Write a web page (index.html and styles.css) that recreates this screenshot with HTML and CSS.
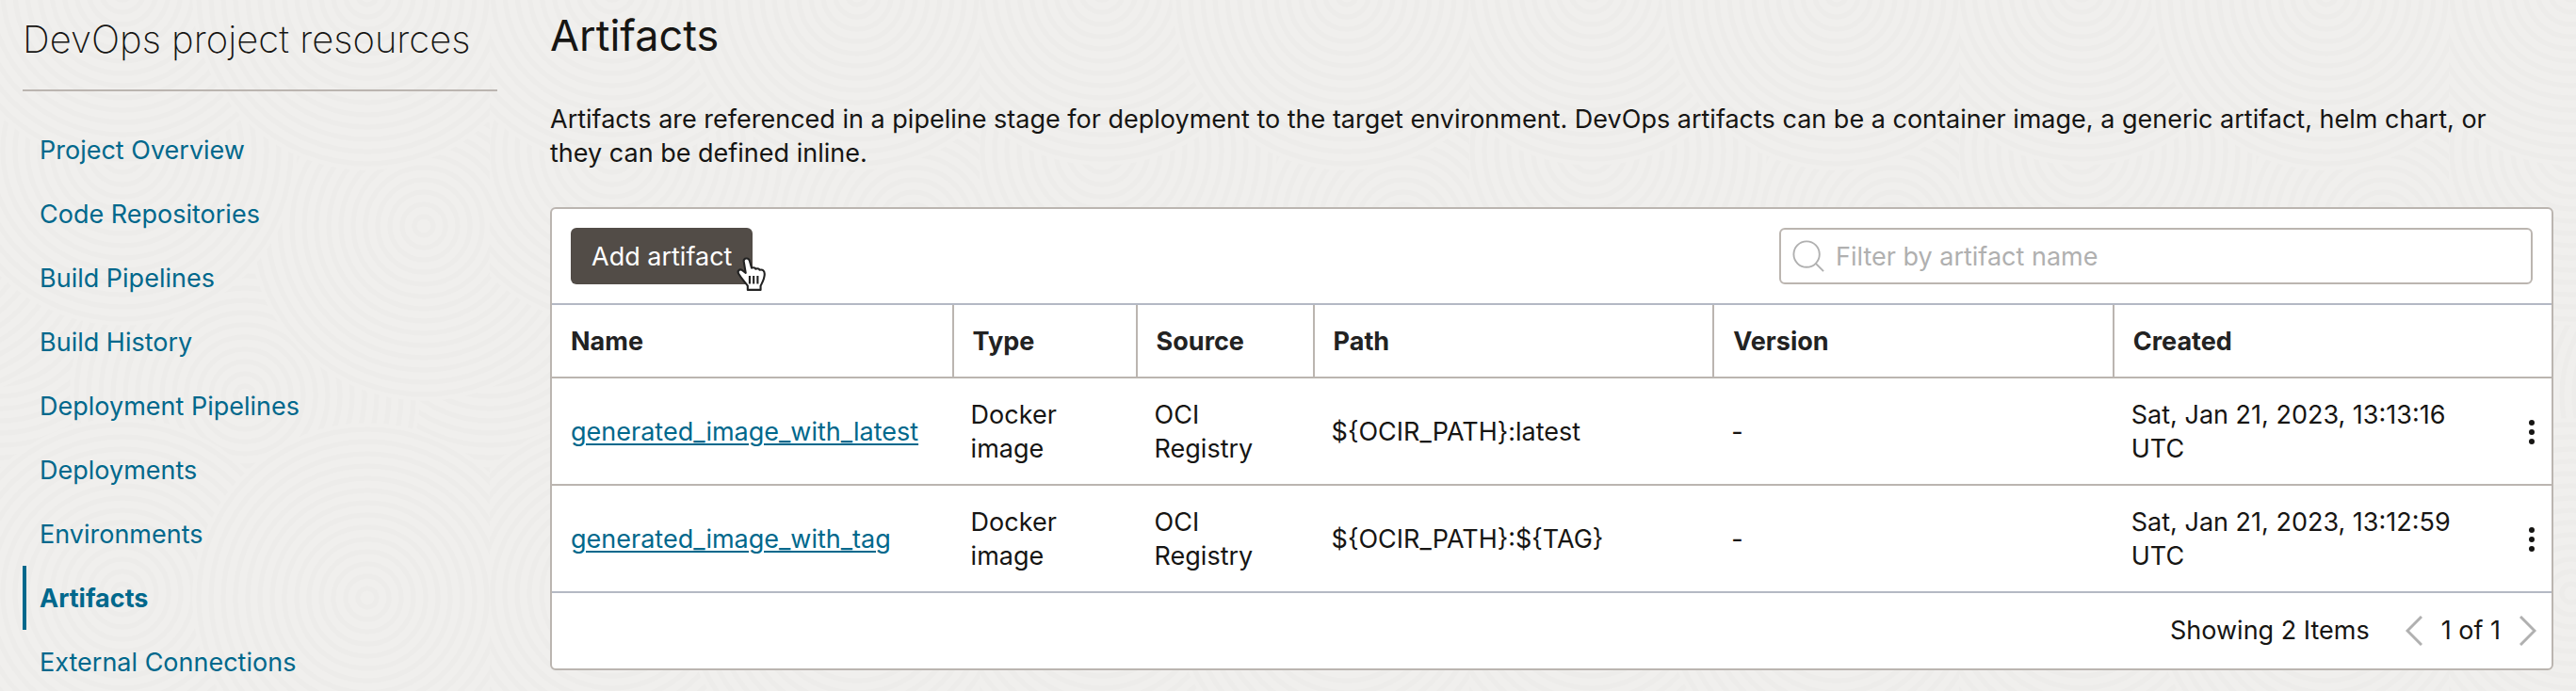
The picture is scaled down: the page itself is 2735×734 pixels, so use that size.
FILE: index.html
```html
<!DOCTYPE html>
<html lang="en">
<head>
<meta charset="utf-8">
<meta name="viewport" content="width=device-width, initial-scale=1">
<title>Artifacts</title>
<link rel="stylesheet" href="styles.css">
</head>
<body>
<svg class="backdrop" aria-hidden="true">
  <defs>
    <g id="swirl" fill="none">
      <circle r="186" fill="#f0efed" stroke="none"/>
      <g stroke="#edecea" stroke-width="5">
        <circle r="10"/><circle r="23"/><circle r="36"/><circle r="49"/><circle r="62"/><circle r="75"/><circle r="88"/><circle r="101"/><circle r="114"/><circle r="127"/><circle r="140"/><circle r="153"/><circle r="166"/><circle r="179"/>
      </g>
    </g>
    <pattern id="swirls" width="520" height="640" patternUnits="userSpaceOnUse">
      <rect width="520" height="640" fill="#f0efed"/>
      <use href="#swirl" x="260" y="20"/><use href="#swirl" x="260" y="660"/>
      <use href="#swirl" x="0" y="320"/><use href="#swirl" x="520" y="320"/>
      <use href="#swirl" x="260" y="420"/>
      <use href="#swirl" x="450" y="240"/><use href="#swirl" x="-70" y="240"/>
      <use href="#swirl" x="130" y="160"/>
      <use href="#swirl" x="130" y="630"/><use href="#swirl" x="130" y="-10"/>
      <use href="#swirl" x="390" y="635"/><use href="#swirl" x="390" y="-5"/>
    </pattern>
  </defs>
  <rect width="100%" height="100%" fill="url(#swirls)"/>
</svg>
<div class="page">
  <aside class="sidebar">
    <h2 class="sidebar-title">DevOps project resources</h2>
    <nav class="nav" aria-label="DevOps project resources">
      <a class="nav-link" href="#overview">Project Overview</a>
      <a class="nav-link" href="#repositories">Code Repositories</a>
      <a class="nav-link" href="#build-pipelines">Build Pipelines</a>
      <a class="nav-link" href="#build-history">Build History</a>
      <a class="nav-link" href="#deployment-pipelines">Deployment Pipelines</a>
      <a class="nav-link" href="#deployments">Deployments</a>
      <a class="nav-link" href="#environments">Environments</a>
      <a class="nav-link nav-link-active" href="#artifacts" aria-current="page">Artifacts</a>
      <a class="nav-link" href="#connections">External Connections</a>
    </nav>
  </aside>
  <main class="main">
    <h1 class="title">Artifacts</h1>
    <p class="intro">Artifacts are referenced in a pipeline stage for deployment to the target environment. DevOps artifacts can be a container image, a generic artifact, helm chart, or they can be defined inline.</p>
    <section class="card">
      <div class="toolbar">
        <div class="add">
          <button class="add-button" type="button">Add artifact</button>
          <svg class="pointer" viewBox="0 0 30 36" aria-hidden="true">
            <path d="M8 5c0-3 5-4 6 0l2 7c2-1 4 0 4 1 2-1 4 0 4 1 3-1 5 1 5 4 0 5-2 8-4 12v4H12v-4c-3-4-6-7-9-12-2-3 1-5 3-4l4 3z" fill="#fff" stroke="#222" stroke-width="2" stroke-linejoin="round"/>
            <path d="M14 20v8M18 20v8M22 20v8" fill="none" stroke="#222" stroke-width="2"/>
          </svg>
        </div>
        <label class="search">
          <svg class="search-icon" viewBox="0 0 36 36" aria-hidden="true"><circle cx="16" cy="16" r="14.500"/><path d="M26 26l9 9"/></svg>
          <input class="search-input" type="text" placeholder="Filter by artifact name" aria-label="Filter by artifact name">
        </label>
      </div>
      <table class="table">
        <colgroup><col class="col-wide"><col class="col-type"><col class="col-source"><col class="col-wide"><col class="col-wide"><col><col class="col-menu"></colgroup>
        <thead>
          <tr><th>Name</th><th>Type</th><th>Source</th><th>Path</th><th>Version</th><th colspan="2">Created</th></tr>
        </thead>
        <tbody>
          <tr>
            <td><a class="artifact" href="#latest">generated_image_with_latest</a></td><td>Docker image</td><td>OCI Registry</td><td>${OCIR_PATH}:latest</td><td>-</td><td>Sat, Jan 21, 2023, 13:13:16 UTC</td>
            <td class="menu-cell"><button class="menu" type="button" aria-label="Actions for generated_image_with_latest"><svg class="dots" viewBox="0 0 8 28"><circle cx="4" cy="4" r="3"/><circle cx="4" cy="14" r="3"/><circle cx="4" cy="24" r="3"/></svg></button></td>
          </tr>
          <tr>
            <td><a class="artifact" href="#tag">generated_image_with_tag</a></td><td>Docker image</td><td>OCI Registry</td><td>${OCIR_PATH}:${TAG}</td><td>-</td><td>Sat, Jan 21, 2023, 13:12:59 UTC</td>
            <td class="menu-cell"><button class="menu" type="button" aria-label="Actions for generated_image_with_tag"><svg class="dots" viewBox="0 0 8 28"><circle cx="4" cy="4" r="3"/><circle cx="4" cy="14" r="3"/><circle cx="4" cy="24" r="3"/></svg></button></td>
          </tr>
        </tbody>
      </table>
      <footer class="footer">
        <span>Showing 2 Items</span>
        <div class="pager">
          <button class="page-button" type="button" aria-label="Previous page"><svg class="chevron" viewBox="0 0 18 32"><path d="M17 1L2 16l15 15"/></svg></button>
          <span>1 of 1</span>
          <button class="page-button" type="button" aria-label="Next page"><svg class="chevron" viewBox="0 0 18 32"><path d="M1 1l15 15L1 31"/></svg></button>
        </div>
      </footer>
    </section>
  </main>
</div>
</body>
</html>
```
FILE: styles.css
```css
* { box-sizing: border-box; }
body {
  margin: 0;
  min-height: 100vh;
  overflow: hidden;
  background: #f0efed;
  color: #161513;
  font: 27px/36px Inter, "Liberation Sans", sans-serif;
}
button { font: inherit; border: 0; background: none; padding: 0; cursor: pointer; }
.backdrop { position: absolute; inset: 0; z-index: -1; width: 100%; height: 100%; }
.page { display: flex; gap: 56px; padding: 0 24px; }

.sidebar { flex: 0 0 504px; }
.sidebar-title {
  margin: 0 0 28px;
  padding: 14px 0 25px;
  border-bottom: 2px solid #bbb5b0;
  font-size: 40px;
  line-height: 56px;
  font-weight: 200;
  white-space: nowrap;
}
.nav { display: flex; flex-direction: column; }
.nav-link {
  padding: 17px 0 15px 14px;
  border-left: 4px solid transparent;
  color: #00688c;
  text-decoration: none;
}
.nav-link-active { border-color: #00688c; font-weight: 700; }

.main { flex: 1; min-width: 0; }
.title { margin: 0; padding: 10px 0 43px; font-size: 45px; line-height: 56px; font-weight: 400; }
.intro { margin: 0 0 39px; padding-right: 20px; }

.card { border: 2px solid #bbb5b0; border-radius: 6px; background: #fff; }
.toolbar {
  display: flex;
  justify-content: space-between;
  padding: 20px;
  border-bottom: 2px solid #b4b9c4;
}
.add { position: relative; }
.add-button {
  height: 60px;
  padding: 1px 22px 0;
  border-radius: 6px;
  background: #524c47;
  color: #fff;
}
.pointer { position: absolute; right: -14px; bottom: -8px; width: 32px; height: 38px; }
.search {
  display: flex;
  align-items: center;
  gap: 12px;
  width: 800px;
  height: 60px;
  padding: 0 12px;
  border: 2px solid #bbb5b0;
  border-radius: 6px;
}
.search-icon { flex: none; width: 34px; height: 34px; fill: none; stroke: #b0b0b0; stroke-width: 2; }
.search-input { flex: 1; min-width: 0; padding: 2px 0 0; border: 0; outline: 0; background: none; font: inherit; color: inherit; }
.search-input::placeholder { color: #b0b0b0; opacity: 1; }

.table { width: 100%; table-layout: fixed; border-collapse: separate; border-spacing: 0; }
.col-wide { width: 20%; }
.col-type { width: 195px; }
.col-source { width: 188px; }
.col-menu { width: 72px; }
th { padding: 21px 20px 19px; border-left: 2px solid #bbb5b0; border-bottom: 2px solid #bbb5b0; text-align: left; font-weight: 700; color: #222; }
th:first-child { border-left: 0; }
td { height: 114px; padding: 21px 20px 19px; border-bottom: 2px solid #bbb5b0; }
tbody tr:last-child td { border-color: #b4b9c4; }
.artifact { color: #00688c; text-decoration-thickness: 2px; text-underline-offset: 3px; }
.menu-cell { padding: 2px 17px 0; }
.menu { display: flex; margin-left: auto; }
.dots { width: 8px; height: 28px; fill: #161513; }

.footer { display: flex; justify-content: flex-end; align-items: center; gap: 38px; padding: 22px 16px; }
.pager { display: flex; align-items: center; gap: 20px; }
.page-button { display: flex; }
.chevron { width: 18px; height: 32px; fill: none; stroke: #b0b0b0; stroke-width: 3; }
```
